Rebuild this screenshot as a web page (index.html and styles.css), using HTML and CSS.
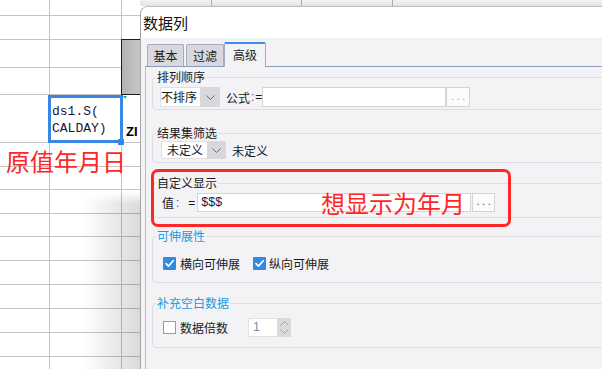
FILE: index.html
```html
<!DOCTYPE html>
<html lang="zh-CN">
<head>
<meta charset="utf-8">
<title>数据列</title>
<link rel="stylesheet" href="styles.css">
</head>
<body>
<div class="screen">
  <div class="sheet">
    <div class="cell cell-dark"></div>
    <div class="cell cell-code">ds1.S(<br>CALDAY)</div>
    <div class="cell cell-zi">ZI</div>
    <!-- row 1-2 -->
    <div class="cell"></div><div class="cell"></div><div class="cell"></div>
    <div class="cell"></div><div class="cell"></div><div class="cell"></div>
    <!-- row 3-4 -->
    <div class="cell"></div><div class="cell"></div>
    <div class="cell"></div><div class="cell"></div>
    <!-- row 5 -->
    <div class="cell"></div>
    <!-- rows 6-15 -->
    <div class="cell"></div><div class="cell"></div><div class="cell"></div>
    <div class="cell"></div><div class="cell"></div><div class="cell"></div>
    <div class="cell"></div><div class="cell"></div><div class="cell"></div>
    <div class="cell"></div><div class="cell"></div><div class="cell"></div>
    <div class="cell"></div><div class="cell"></div><div class="cell"></div>
    <div class="cell"></div><div class="cell"></div><div class="cell"></div>
    <div class="cell"></div><div class="cell"></div><div class="cell"></div>
    <div class="cell"></div><div class="cell"></div><div class="cell"></div>
    <div class="cell"></div><div class="cell"></div><div class="cell"></div>
    <div class="cell"></div><div class="cell"></div><div class="cell"></div>
  </div>

  <div class="side">
    <div class="colbar">
      <span class="colseg seg-a"></span>
      <span class="colseg seg-b"></span>
      <span class="colseg seg-c"></span>
      <span class="colseg seg-d"></span>
    </div>
    <div class="dialog">
      <div class="titlebar">数据列</div>
      <div class="tabs">
        <div class="tab tab-basic">基本</div>
        <div class="tab tab-filter">过滤</div>
        <div class="tab tab-adv active">高级</div>
      </div>
      <div class="panel">
        <fieldset class="grp grp-sort">
          <legend>排列顺序</legend>
          <div class="row row-sort">
            <div class="select sel-sort">
              <span class="sel-val">不排序</span>
              <span class="sel-arr"><svg width="9" height="5" viewBox="0 0 9 5"><polyline points="0.5,0.5 4.5,4.5 8.5,0.5" fill="none" stroke="#707070" stroke-width="1"/></svg></span>
            </div>
            <span class="formula-lbl">公式<span class="colon">:</span><span class="eq">=</span></span>
            <span class="field field-formula"></span>
            <span class="more more-pink">...</span>
          </div>
        </fieldset>

        <fieldset class="grp grp-filter">
          <legend>结果集筛选</legend>
          <div class="row row-filter">
            <div class="select sel-filter">
              <span class="sel-val">未定义</span>
              <span class="sel-arr"><svg width="9" height="5" viewBox="0 0 9 5"><polyline points="0.5,0.5 4.5,4.5 8.5,0.5" fill="none" stroke="#707070" stroke-width="1"/></svg></span>
            </div>
            <span class="filter-text">未定义</span>
          </div>
        </fieldset>

        <fieldset class="grp grp-custom">
          <legend>自定义显示</legend>
          <div class="row row-custom">
            <span class="val-lbl">值</span><span class="colon colon-val">:</span><span class="eq eq-val">=</span>
            <span class="field field-value">$$$</span>
            <span class="more more-dark">...</span>
          </div>
        </fieldset>

        <fieldset class="grp grp-stretch">
          <legend>可伸展性</legend>
          <div class="row row-stretch">
            <span class="cb cb-on cb-first"><svg width="13" height="13" viewBox="0 0 13 13"><path d="M3 6.6 L5.5 9.1 L10.2 3.7" fill="none" stroke="#fff" stroke-width="1.7" stroke-linecap="round" stroke-linejoin="round"/></svg></span>
            <span class="cb-text">横向可伸展</span>
            <span class="cb cb-on cb-second"><svg width="13" height="13" viewBox="0 0 13 13"><path d="M3 6.6 L5.5 9.1 L10.2 3.7" fill="none" stroke="#fff" stroke-width="1.7" stroke-linecap="round" stroke-linejoin="round"/></svg></span>
            <span class="cb-text cb-text-second">纵向可伸展</span>
          </div>
        </fieldset>

        <fieldset class="grp grp-fill">
          <legend>补充空白数据</legend>
          <div class="row row-fill">
            <span class="cb cb-off cb-first"></span>
            <span class="cb-text">数据倍数</span>
            <div class="spin">
              <span class="spin-val">1</span>
              <span class="spin-btns">
                <svg width="9" height="5" viewBox="0 0 9 5"><polyline points="0.5,4.5 4.5,0.5 8.5,4.5" fill="none" stroke="#a4a4a8" stroke-width="1"/></svg>
                <svg width="9" height="5" viewBox="0 0 9 5"><polyline points="0.5,0.5 4.5,4.5 8.5,0.5" fill="none" stroke="#a4a4a8" stroke-width="1"/></svg>
              </span>
            </div>
          </div>
        </fieldset>
      </div>
    </div>
  </div>

  <div class="shade"></div>
  <div class="selbox"></div>
  <div class="selhandle"></div>
  <div class="selmark mark-tl"></div>
  <div class="selmark mark-tr"></div>
  <div class="note note-orig">原值年月日</div>
  <div class="redbox"></div>
  <div class="note note-want">想显示为年月</div>
</div>
</body>
</html>
```

FILE: styles.css
```css
* { box-sizing: border-box; }
html, body { margin: 0; padding: 0; }
body {
  width: 602px;
  height: 369px;
  overflow: hidden;
  background: #fff;
  font-family: "Noto Sans CJK SC", "Microsoft YaHei", sans-serif;
  font-size: 12px;
  color: #1a1a1a;
}
.screen {
  position: relative;
  width: 602px;
  height: 369px;
  overflow: hidden;
  display: flex;
}

/* spreadsheet */
.sheet {
  flex: none;
  width: 140px;
  height: 369px;
  display: grid;
  grid-template-columns: 49px 71px 18px;
  grid-template-rows: 15px 23px 27px 26px 47px 23px 22px 23px 22px 23px 23px 23px 23px 23px 12px;
  gap: 1px;
  background: #c4c4c4;
  align-content: start;
}
.cell { background: #fff; }
.cell-dark {
  grid-column: 3;
  grid-row: 3 / span 2;
  background: linear-gradient(to right, #b2b2b2, #c6c6c6);
  outline: 1px solid #1e1e1e;
}
.cell-code {
  grid-column: 2;
  grid-row: 5;
  padding: 8px 0 0 2px;
  font-family: "Liberation Mono", monospace;
  font-size: 13px;
  line-height: 17px;
  color: #17173a;
  white-space: nowrap;
}
.cell-zi {
  grid-column: 3;
  grid-row: 5;
  padding: 29px 0 0 4px;
  font-family: "Liberation Sans", sans-serif;
  font-weight: bold;
  font-size: 13px;
  line-height: 15px;
  color: #000;
  overflow: hidden;
  white-space: nowrap;
}

/* right side */
.side {
  flex: none;
  width: 600px;
  display: flex;
  flex-direction: column;
}
.colbar {
  flex: none;
  height: 6px;
  display: flex;
  background: linear-gradient(#f2f2f2, #e3e3e3);
}
.colseg { flex: none; height: 6px; border-right: 1px solid #aaaaaa; }
.seg-a { width: 72px; }
.seg-b { width: 90px; }
.seg-c { width: 91px; }
.seg-d { flex: 1; border-right: none; }

.dialog {
  flex: 1;
  display: flex;
  flex-direction: column;
  background: #f3f3f6;
  border-left: 1px solid #a4a4a4;
  border-top: 1px solid #bdbdbd;
  border-top-left-radius: 8px;
  overflow: hidden;
}
.titlebar {
  flex: none;
  height: 31px;
  background: #fff;
  padding-left: 2px;
  font-size: 15px;
  line-height: 31px;
  color: #111;
}
.tabs {
  flex: none;
  height: 28px;
  display: flex;
  align-items: flex-end;
  padding-left: 6px;
  position: relative;
  z-index: 1;
}
.tab {
  height: 22px;
  background: #d9d9dd;
  border: 1px solid #a2acc2;
  border-bottom: none;
  border-radius: 2px 2px 0 0;
  text-align: center;
  line-height: 21px;
  color: #1a1a1a;
}
.tab-basic { width: 37px; margin-right: 2px; }
.tab-filter { width: 38px; }
.tab-adv { width: 42px; }
.tab.active {
  height: 25px;
  margin-bottom: -1px;
  background: #f3f3f6;
  border-top: 2px solid #3d8ee6;
  line-height: 21px;
}

.panel {
  flex: 1;
  margin-left: 4px;
  border-top: 1px solid #8c9dc2;
  border-left: 1px solid #b2bed5;
  padding: 2px 0 0 6px;
  display: flex;
  flex-direction: column;
}

.grp {
  margin: 0;
  min-width: 0;
  border: 1px solid #dedee2;
  border-radius: 4px;
  padding: 0 4px;
}
.grp legend {
  padding: 0 1px;
  margin-left: -1px;
  font-size: 12px;
  line-height: 16px;
  color: #1a1a1a;
}
.grp-sort { padding-top: 2px; padding-bottom: 2px; }
.grp-filter { margin-top: 15px; padding-top: 0; padding-bottom: 3px; }
.grp-custom { margin-top: 12px; padding-top: 2px; padding-bottom: 5px; }
.grp-stretch { margin-top: 10px; padding-top: 11px; padding-bottom: 11px; }
.grp-fill { margin-top: 12px; padding-top: 7px; padding-bottom: 10px; }
.grp-stretch legend, .grp-fill legend { color: #1c9ade; }

.row { display: flex; align-items: center; white-space: nowrap; }
.row-sort { height: 20px; }
.row-filter { height: 18px; }
.row-custom { height: 19px; }
.row-stretch { height: 16px; }
.row-fill { height: 19px; }

.select { display: flex; flex: none; }
.sel-val {
  background: #fff;
  border: 1px solid #e0e0e3;
  border-right: none;
  color: #1a1a1a;
}
.sel-arr {
  display: flex;
  align-items: center;
  justify-content: center;
  background: #d8d8dc;
}
.sel-sort { margin-left: 3px; height: 20px; }
.sel-sort .sel-val { width: 40px; line-height: 18px; padding-left: 0; }
.sel-sort .sel-arr { width: 20px; }
.sel-filter { margin-left: 4px; height: 18px; }
.sel-filter .sel-val { width: 46px; line-height: 16px; padding-left: 5px; }
.sel-filter .sel-arr { width: 19px; }

.formula-lbl { margin-left: 6px; display: flex; align-items: center; }
.colon {
  font-family: "Liberation Sans", sans-serif;
  color: #7a3f8e;
  margin-left: 1px;
}
.eq {
  font-family: "Liberation Sans", sans-serif;
  color: #1a1a1a;
  margin-left: 1px;
  width: 7px;
}
.field {
  flex: none;
  background: #fff;
  border: 1px solid #d4d4d6;
}
.field-formula { width: 184px; height: 20px; }
.more {
  flex: none;
  background: #fbfbfc;
  border: 1px solid #d4d4d6;
  text-align: center;
  font-family: "Liberation Sans", sans-serif;
  font-size: 11px;
  letter-spacing: 2.6px;
  padding-left: 2px;
}
.more-pink { width: 24px; height: 20px; line-height: 16px; color: #c08ac8; }
.more-dark { width: 23px; height: 19px; line-height: 15px; color: #4c4c4c; margin-left: 1px; }

.filter-text { margin-left: 6px; color: #1a1a1a; }

.val-lbl { margin-left: 5px; color: #1a1a1a; }
.colon-val { margin-left: 2px; }
.eq-val { margin-left: 9px; }
.field-value {
  width: 274px;
  height: 19px;
  margin-left: 2px;
  padding-left: 3px;
  font-family: "Liberation Sans", sans-serif;
  font-size: 12.5px;
  line-height: 17px;
  color: #1c1c52;
}

.cb {
  flex: none;
  width: 13px;
  height: 13px;
  display: flex;
}
.cb-on { background: #2f8ae6; border-radius: 1px; }
.cb-off { background: #fff; border: 1px solid #9c9c9c; }
.cb-first { margin-left: 6px; }
.cb-second { margin-left: 13px; }
.cb-text { margin-left: 4px; color: #1a1a1a; }
.cb-text-second { margin-left: 3px; }

.spin { display: flex; flex: none; margin-left: 20px; height: 19px; }
.spin-val {
  width: 29px;
  background: #fff;
  border: 1px solid #e2e2e4;
  border-right: none;
  padding-left: 4px;
  font-family: "Liberation Sans", sans-serif;
  font-size: 12.5px;
  line-height: 17px;
  color: #8a8ca8;
}
.spin-btns {
  width: 14px;
  background: #dadadd;
  display: flex;
  flex-direction: column;
  align-items: center;
  justify-content: space-around;
  padding: 2px 0;
}

/* overlays */
.shade {
  position: absolute;
  left: 83px;
  top: 192px;
  width: 57px;
  height: 177px;
  background: linear-gradient(to right, rgba(0,0,0,0), rgba(0,0,0,0.1) 68%, rgba(0,0,0,0.14));
  -webkit-mask-image: linear-gradient(to bottom, transparent, #000 12px);
  mask-image: linear-gradient(to bottom, transparent, #000 12px);
}
.selbox {
  position: absolute;
  left: 48px;
  top: 95px;
  width: 75px;
  height: 48px;
  border: 3px solid #3987e5;
}
.selhandle {
  position: absolute;
  left: 118px;
  top: 139px;
  width: 6px;
  height: 6px;
  background: #3987e5;
}
.selmark {
  position: absolute;
  width: 0;
  height: 0;
  border-style: solid;
}
.mark-tl {
  left: 50px;
  top: 97px;
  border-width: 3px 3px 0 0;
  border-color: #8a8a8a transparent transparent transparent;
}
.mark-tr {
  left: 123px;
  top: 96px;
  border-width: 3px 2px 0 2px;
  border-color: #2aa89a transparent transparent transparent;
}
.note {
  position: absolute;
  font-family: "Noto Sans CJK SC", sans-serif;
  font-size: 24px;
  line-height: 28px;
  color: #ff2626;
  white-space: nowrap;
}
.note-orig { left: 6px; top: 147px; }
.note-want { left: 321px; top: 189px; }
.redbox {
  position: absolute;
  left: 151px;
  top: 169px;
  width: 360px;
  height: 58px;
  border: 3px solid #ff2626;
  border-radius: 7px;
}
```
